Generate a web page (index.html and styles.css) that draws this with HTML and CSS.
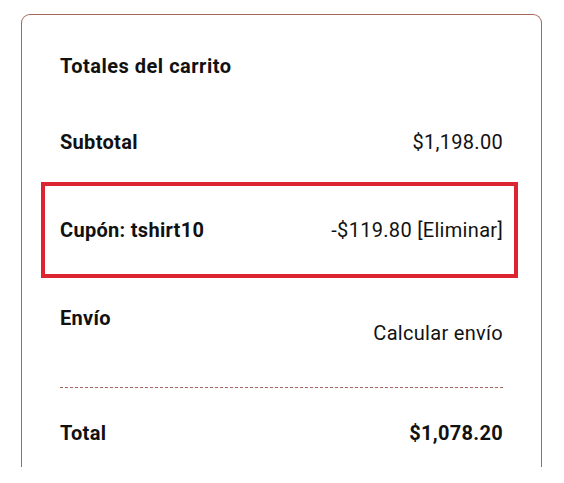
FILE: index.html
```
<!doctype html>
<html>

<head>
    <title>Totales del carrito</title>
    <link rel="stylesheet" href="styles.css">
</head>

<body>
    <div class="cart_totals">
        <h2 class="title">Totales del carrito</h2>
        <div class="row">
            <span class="label">Subtotal</span>
            <span class="amount">$1,198.00</span>
        </div>
        <div class="row coupon">
            <span class="label">Cupón: tshirt10</span>
            <span class="amount">-$119.80 <a href="#">[Eliminar]</a></span>
        </div>
        <div class="row shipping">
            <span class="label">Envío</span>
            <span class="amount">Calcular envío</span>
        </div>
        <div class="row total">
            <span class="label">Total</span>
            <span class="amount">$1,078.20</span>
        </div>
    </div>
</body>

</html>
```

FILE: styles.css
```
body {
    margin: 0;
    padding: 14px 22px 16px 21px;
    background: #fff;
    color: #111;
    font-family: Roboto, "Liberation Sans", sans-serif;
    font-size: 20px;
    letter-spacing: 0.3px;
}

.cart_totals {
    height: 453px;
    box-sizing: border-box;
    border: 1px solid #a6675e;
    border-bottom: none;
    border-radius: 9px 9px 0 0;
    padding: 39px 38px 0 38px;
    display: flex;
    flex-direction: column;
}

.title {
    margin: 0 0 24px 0;
    height: 24px;
    line-height: 24px;
    font-size: 20px;
    letter-spacing: 0.5px;
    font-weight: bold;
}

.row {
    display: flex;
    justify-content: space-between;
    align-items: center;
    height: 80px;
    line-height: 24px;
}

.label {
    font-weight: bold;
}

.amount a {
    color: inherit;
    text-decoration: none;
}

.coupon {
    height: 96px;
    box-sizing: border-box;
    border: 4px solid #dc2530;
    margin: 0 -15px 0 -19px;
    padding: 0 11px 0 15px;
}

.shipping {
    height: 110px;
    box-sizing: border-box;
    padding-bottom: 1px;
    background: linear-gradient(to right, #a6675e 3px, transparent 3px) repeat-x left bottom / 5px 1px;
}

.shipping .label {
    align-self: flex-start;
    padding-top: 28px;
}

.total {
    flex: 1;
    padding-top: 10px;
}

.total .amount {
    font-weight: bold;
}
```
